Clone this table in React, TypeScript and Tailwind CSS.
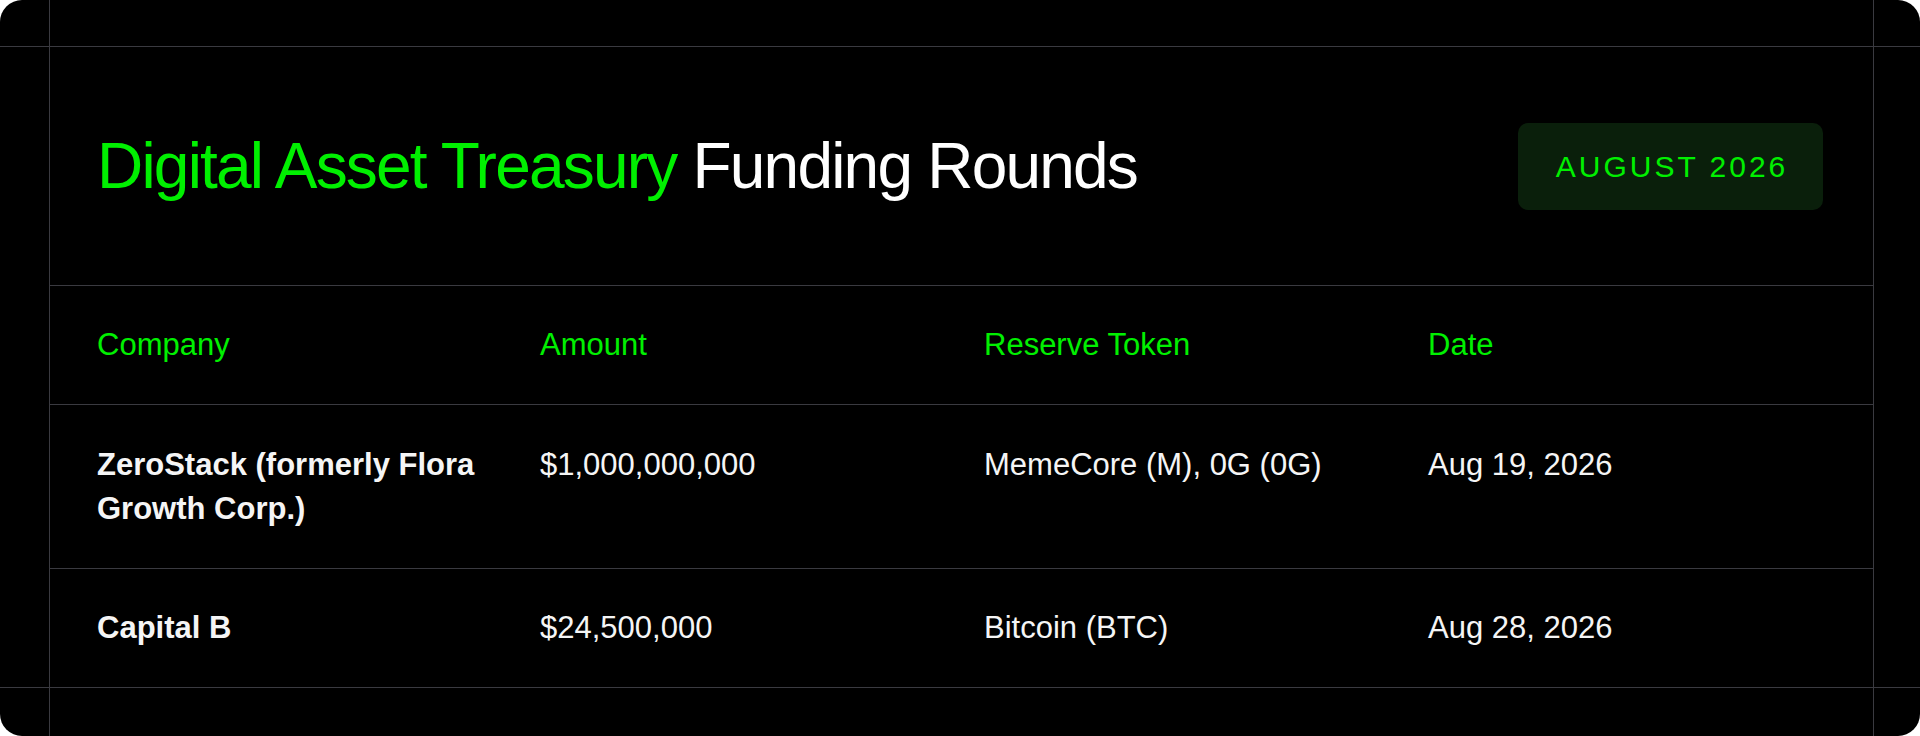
const rows = [
  {
    company: "ZeroStack (formerly Flora Growth Corp.)",
    amount: "$1,000,000,000",
    token: "MemeCore (M), 0G (0G)",
    date: "Aug 19, 2026",
  },
  {
    company: "Capital B",
    amount: "$24,500,000",
    token: "Bitcoin (BTC)",
    date: "Aug 28, 2026",
  },
];

const cols = "grid grid-cols-[443px_444px_444px_1fr] pl-[47px] pr-[47px] text-[31px] leading-[44px]";

export default function App() {
  return (
    <div className="bg-white min-h-screen font-['Liberation_Sans',Arial,sans-serif]">
      <div className="h-[736px] w-full bg-black rounded-[22px] overflow-hidden grid grid-cols-[49px_1px_1fr_1px_46px] grid-rows-[46px_1px_1fr_1px_48px]">
        {/* guide lines */}
        <div className="col-start-2 row-start-1 row-end-6 bg-[#3a3a40]" />
        <div className="col-start-4 row-start-1 row-end-6 bg-[#3a3a40]" />
        <div className="row-start-2 col-start-1 col-end-6 bg-[#3a3a40]" />
        <div className="row-start-4 col-start-1 col-end-6 bg-[#3a3a40]" />

        {/* content */}
        <div className="col-start-3 row-start-3 flex flex-col">
          <div className="h-[238px] flex items-center justify-between pl-[47px] pr-[50px]">
            <h1 className="text-[64px] leading-none tracking-[-0.028em] text-white">
              <span className="text-[#00f000]">Digital Asset Treasury</span> Funding Rounds
            </h1>
            <div className="w-[305px] h-[87px] rounded-[10px] bg-[#0a1f0b] flex items-center justify-center">
              <span className="text-[30px] tracking-[0.1em] text-[#00f000] pl-[3px]">AUGUST 2026</span>
            </div>
          </div>

          <div className={`${cols} border-t border-[#3a3a40] py-[37px] text-[#00f000]`}>
            <div>Company</div>
            <div>Amount</div>
            <div>Reserve Token</div>
            <div>Date</div>
          </div>

          <div className={`${cols} border-t border-[#3a3a40] pt-[38px] pb-[37px] text-[#f5f5f5]`}>
            <div className="font-bold pr-[30px]">{rows[0].company}</div>
            <div>{rows[0].amount}</div>
            <div>{rows[0].token}</div>
            <div>{rows[0].date}</div>
          </div>

          <div className={`${cols} flex-1 items-center border-t border-[#3a3a40] text-[#f5f5f5]`}>
            <div className="font-bold">{rows[1].company}</div>
            <div>{rows[1].amount}</div>
            <div>{rows[1].token}</div>
            <div>{rows[1].date}</div>
          </div>
        </div>
      </div>
    </div>
  );
}
